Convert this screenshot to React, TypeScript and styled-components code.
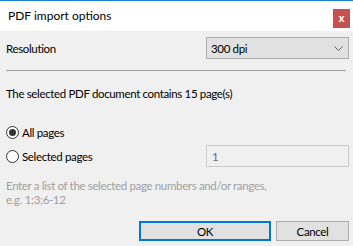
import React from "react";
import styled, { createGlobalStyle } from "styled-components";

const GlobalStyle = createGlobalStyle`
  html, body { margin: 0; padding: 0; background: #f0f0f0; }
  * { box-sizing: border-box; }
`;

const FONT = `Lato, "Segoe UI", "Liberation Sans", sans-serif`;

const Window = styled.div`
  width: 353px;
  height: 246px;
  display: flex;
  flex-direction: column;
  background: #f0f0f0;
  font-family: ${FONT};
  font-size: 11.5px;
  letter-spacing: -0.35px;
  color: #000;
  overflow: hidden;
`;

const TitleBar = styled.div`
  height: 31px;
  background: #fff;
  border-top: 1px solid #1883d7;
  display: flex;
  align-items: center;
  padding-left: 8px;
  padding-right: 3px;
`;

const Title = styled.div`
  flex: 1;
  font-size: 12px;
  letter-spacing: 0;
  margin-top: -1px;
`;

const CloseButton = styled.div`
  width: 17px;
  height: 19px;
  margin-top: 4px;
  background: #c75050;
  color: #fff;
  font-weight: bold;
  font-size: 11px;
  letter-spacing: 0;
  display: flex;
  align-items: center;
  justify-content: center;
  font-family: "Liberation Sans", sans-serif;
`;

const Content = styled.div`
  padding: 0 4px 0 6px;
  display: flex;
  flex-direction: column;
`;

const Row = styled.div<{ $top: number; $h: number }>`
  margin-top: ${(p) => p.$top}px;
  height: ${(p) => p.$h}px;
  display: flex;
  align-items: center;
`;

const Label = styled.div`
  flex: 1;
`;

const Select = styled.div`
  width: 143px;
  height: 22px;
  background: #e1e1e1;
  border: 1px solid #adadad;
  display: flex;
  align-items: center;
  padding: 0 5px 0 4px;
`;

const SelectText = styled.span`
  flex: 1;
`;

const Separator = styled.div`
  margin-top: 11px;
  height: 1px;
  margin-right: 3px;
  background: #a0a0a0;
`;

const RadioLabel = styled.label`
  flex: 1;
  display: flex;
  align-items: center;
  gap: 3px;
`;

const RadioCircle = styled.span<{ $checked?: boolean }>`
  width: 13px;
  height: 13px;
  border-radius: 50%;
  border: 1px solid #333;
  background: #fff;
  display: flex;
  align-items: center;
  justify-content: center;
  &::after {
    content: "";
    width: 7px;
    height: 7px;
    border-radius: 50%;
    background: #333;
    display: ${(p) => (p.$checked ? "block" : "none")};
  }
`;

const Input = styled.div`
  width: 143px;
  height: 22px;
  border: 1px solid #cccccc;
  background: #f0f0f0;
  color: #6d6d6d;
  display: flex;
  align-items: center;
  padding-left: 5px;
`;

const Hint = styled.div`
  margin-top: 12px;
  color: #a0a0a0;
  line-height: 14px;
`;

const Buttons = styled.div`
  margin-top: 14px;
  display: flex;
  gap: 5px;
  justify-content: flex-end;
`;

const Button = styled.div<{ $w: number; $primary?: boolean }>`
  width: ${(p) => p.$w}px;
  height: 20px;
  background: #e1e1e1;
  border: ${(p) => (p.$primary ? "2px solid #0078d7" : "1px solid #adadad")};
  display: flex;
  align-items: center;
  justify-content: center;
`;

const Chevron = () => (
  <svg width="9" height="5" viewBox="0 0 9 5">
    <path d="M0.5 0.5 L4.5 4.5 L8.5 0.5" fill="none" stroke="#606060" strokeWidth="1" />
  </svg>
);

export default function App() {
  return (
    <>
      <GlobalStyle />
      <Window>
        <TitleBar>
          <Title>PDF import options</Title>
          <CloseButton>x</CloseButton>
        </TitleBar>
        <Content>
          <Row $top={6} $h={22}>
            <Label>Resolution</Label>
            <Select>
              <SelectText>300 dpi</SelectText>
              <Chevron />
            </Select>
          </Row>
          <Separator />
          <Row $top={14} $h={16}>
            <Label>The selected PDF document contains 15 page(s)</Label>
          </Row>
          <Row $top={20} $h={22}>
            <RadioLabel>
              <RadioCircle $checked />
              All pages
            </RadioLabel>
          </Row>
          <Row $top={2} $h={22}>
            <RadioLabel>
              <RadioCircle />
              Selected pages
            </RadioLabel>
            <Input>1</Input>
          </Row>
          <Hint>
            Enter a list of the selected page numbers and/or ranges,
            <br />
            e.g. 1;3;6-12
          </Hint>
          <Buttons>
            <Button $w={132} $primary>OK</Button>
            <Button $w={73}>Cancel</Button>
          </Buttons>
        </Content>
      </Window>
    </>
  );
}
